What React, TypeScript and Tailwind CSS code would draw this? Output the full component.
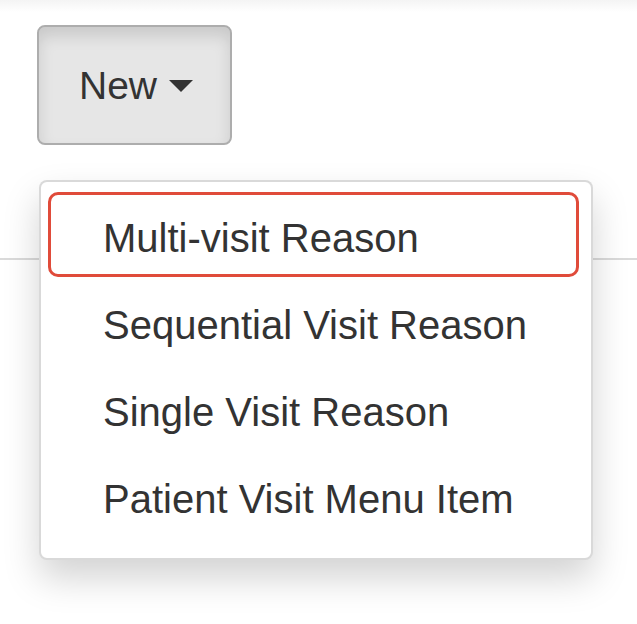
import React from "react";

export default function App() {
  const items = [
    "Multi-visit Reason",
    "Sequential Visit Reason",
    "Single Visit Reason",
    "Patient Visit Menu Item",
  ];

  return (
    <div
      className="relative w-[637px] h-[624px] bg-white overflow-hidden text-[#333]"
      style={{ fontFamily: '"Liberation Sans", Arial, sans-serif' }}
    >
      {/* faint top edge */}
      <div className="h-[12px] bg-gradient-to-b from-[#f4f4f4] to-white" />

      {/* toolbar area with the divider underneath */}
      <div className="h-[248px] border-b-2 border-[#dadada] pl-[37px] pt-[13px]">
        <button className="flex items-center w-[195px] h-[120px] pl-[40px] bg-[#e6e6e6] border-2 border-[#adadad] rounded-[8px] shadow-[inset_0_9px_15px_rgba(0,0,0,0.125)] text-[39px] leading-none text-[#333]">
          <span>New</span>
          <svg width="24" height="13" viewBox="0 0 24 13" className="ml-[12px] mt-[2px]">
            <path d="M0 0 H24 L12 12 Z" fill="#333" />
          </svg>
        </button>
      </div>

      {/* open dropdown menu */}
      <div className="absolute left-[39px] top-[180px] w-[554px] bg-white border-2 border-[rgba(0,0,0,0.15)] rounded-[8px] shadow-[0_18px_36px_rgba(0,0,0,0.175)] pt-[12px] pb-[16px]">
        <div className="absolute left-[7px] top-[10px] w-[531px] h-[85px] border-[3px] border-[#e04b3a] rounded-[10px]" />
        {items.map((label) => (
          <div
            key={label}
            className="flex items-center h-[87px] pl-[62px] text-[40px] leading-none whitespace-nowrap"
          >
            {label}
          </div>
        ))}
      </div>
    </div>
  );
}
